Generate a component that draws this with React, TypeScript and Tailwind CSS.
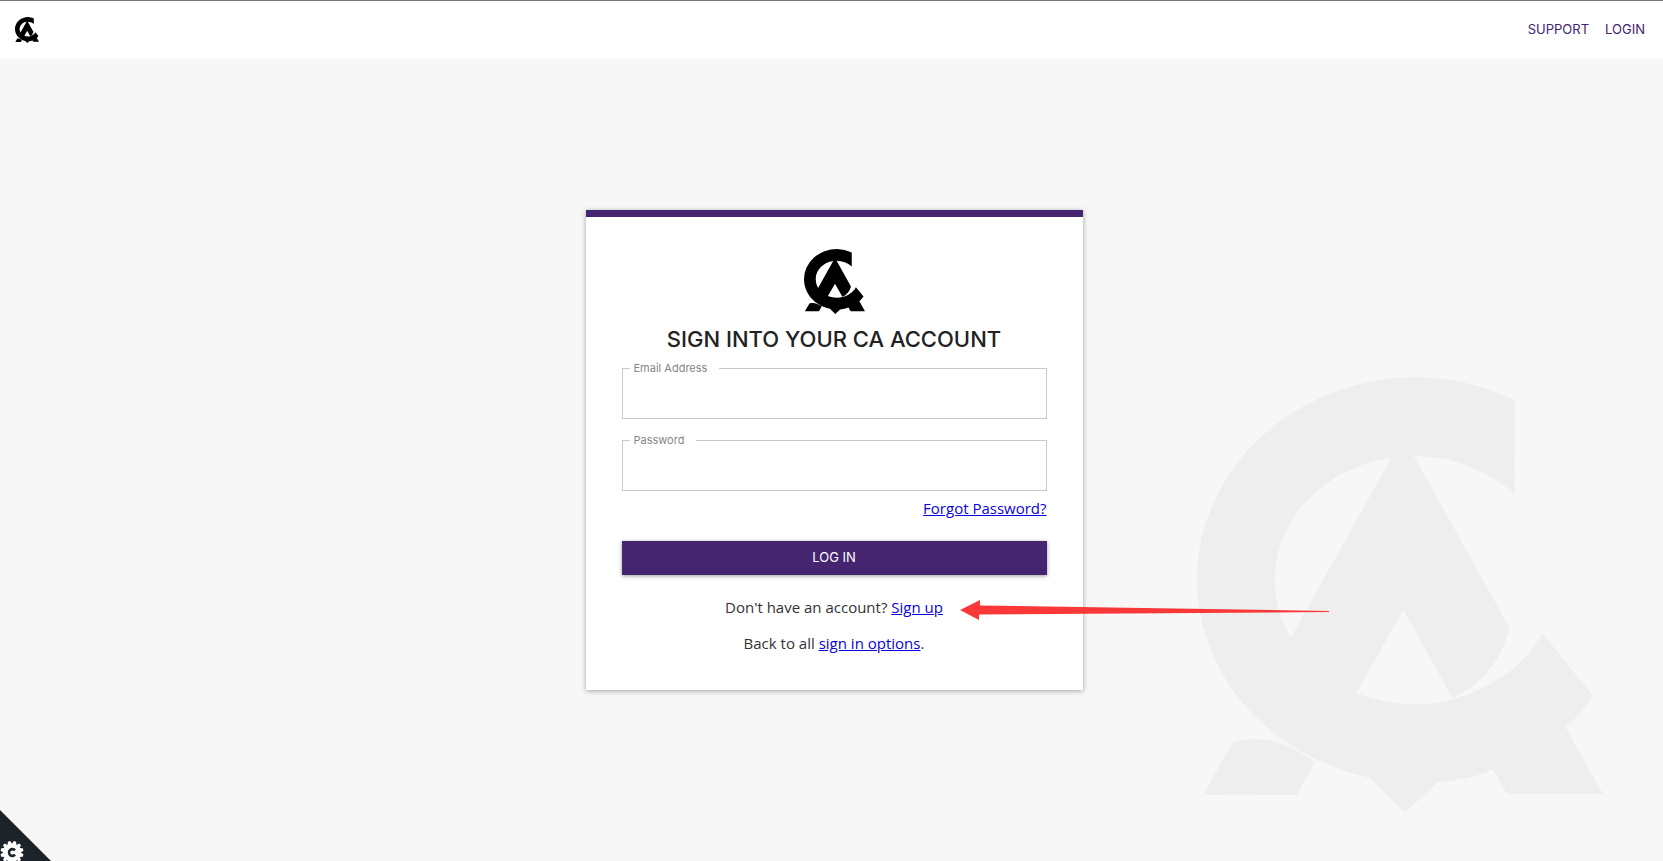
import { useState } from "react";
import type { FormEvent, InputHTMLAttributes } from "react";

// ---- Logo ----

function Logo({ className }: { className?: string }) {
  return (
    <svg
      viewBox="52 50 1218 1308"
      fill="currentColor"
      fillRule="evenodd"
      preserveAspectRatio="none"
      className={className}
      aria-hidden="true"
    >
      <path d="M1005 119A663 607 0 0 0 715 50A663 607 0 0 0 52 657C52 925 245 1180 572 1253L675 1357L775 1265Q862 1260 940 1228L982 1301H1270L1158 1101Q1205 1060 1241 1008L1088 818C1030 925 930 985 820 1017Q770 1032 715 1032C650 1032 590 1022 530 998L671 748L818 1012C905 975 965 900 990 803L703 287C820 287 920 330 1005 400ZM635 292C440 320 286 470 286 659Q286 750 333 833Z" />
      <path d="M160 1145C245 1120 330 1150 405 1205L352 1304L70 1303Z" />
    </svg>
  );
}

// ---- Outlined text field ----

interface FieldProps extends InputHTMLAttributes<HTMLInputElement> {
  id: string;
  label: string;
}

function Field({ id, label, ...rest }: FieldProps) {
  return (
    <div className="relative">
      <input
        id={id}
        className="block h-[51px] w-full border border-[#c8c8c8] bg-white px-3 text-base outline-none focus:border-[#452470]"
        {...rest}
      />
      <label htmlFor={id} className="absolute -top-2 left-2 bg-white pr-3 pl-1 text-[11px] leading-4 text-[#868686]">
        {label}
      </label>
    </div>
  );
}

// ---- Corner badge ----

const TEETH = [0, 30, 60, 90, 120, 150, 180, 210, 240, 270, 300, 330];

function CornerBadge() {
  return (
    <button type="button" aria-label="Cookie settings" className="absolute bottom-0 left-0">
      <svg width="51" height="51" viewBox="0 0 51 51" className="block">
        <path d="M0 0L51 51H0Z" fill="#1d2429" />
        <g transform="translate(12 42.5)">
          <circle r="9" fill="#fff" />
          {TEETH.map((deg) => (
            <path key={deg} d="M-2.4 -8L-1.2 -11.5H1.2L2.4 -8Z" fill="#fff" transform={`rotate(${deg + 15})`} />
          ))}
          <path d="M3 -2.2A3.4 3.4 0 1 0 3 2.2" fill="none" stroke="#1d2429" strokeWidth="2.6" />
        </g>
      </svg>
    </button>
  );
}

const linkClass = "text-[#0a00e0] underline";

export default function App() {
  const [email, setEmail] = useState("");
  const [password, setPassword] = useState("");

  const handleSubmit = (e: FormEvent) => {
    e.preventDefault();
  };

  return (
    <div className="relative flex min-h-screen flex-col overflow-hidden bg-[#f7f7f7] font-[Inter,sans-serif] text-[#222]">
      <header className="flex h-[58px] items-center justify-between border-t border-[#777] bg-white pr-[18px] pl-[15px]">
        <a href="#home" aria-label="Home">
          <Logo className="h-[26px] w-6 text-black" />
        </a>
        <nav className="flex gap-4 text-[13px] text-[#452470]">
          <a href="#support">SUPPORT</a>
          <a href="#login">LOGIN</a>
        </nav>
      </header>

      <Logo className="absolute right-[60px] bottom-12 h-[436px] w-[406px] text-[#eee]" />

      <main className="flex flex-1 items-start justify-center pt-[152px] pb-10 pl-[5px]">
        <section className="relative w-full max-w-[497px] border-t-[7px] border-[#452470] bg-white px-9 pt-8 pb-[35px] shadow-[0_1px_5px_rgba(0,0,0,0.35)]">
          <Logo className="mx-auto h-[65px] w-[61px] text-black" />
          <h1 className="mt-[9px] text-center text-[22px] leading-8 font-medium">SIGN INTO YOUR CA ACCOUNT</h1>

          <form onSubmit={handleSubmit} className="mt-[13px] flex flex-col">
            <div className="flex flex-col gap-[21px]">
              <Field
                id="email"
                label="Email Address"
                type="email"
                value={email}
                onChange={(e) => setEmail(e.target.value)}
              />
              <Field
                id="password"
                label="Password"
                type="password"
                value={password}
                onChange={(e) => setPassword(e.target.value)}
              />
            </div>
            <div className="mt-[5px] text-right font-['Open_Sans',sans-serif] text-[15px] leading-6">
              <a href="#forgot" className={linkClass}>
                Forgot Password?
              </a>
            </div>
            <button
              type="submit"
              className="mt-[21px] h-[34px] bg-[#452470] text-[13px] text-white shadow-[0_1px_4px_rgba(0,0,0,0.4)]"
            >
              LOG IN
            </button>
          </form>

          <div className="mt-5 flex flex-col gap-3 text-center font-['Open_Sans',sans-serif] text-[15px] leading-6 text-[#333]">
            <p>
              Don't have an account?{" "}
              <a href="#signup" className={linkClass}>
                Sign up
              </a>
            </p>
            <p>
              Back to all{" "}
              <a href="#options" className={linkClass}>
                sign in options
              </a>
              .
            </p>
          </div>

          {/* arrow pointing at the sign-up link */}
          <svg
            width="370"
            height="20"
            viewBox="0 0 370 20"
            className="pointer-events-none absolute bottom-[70px] left-[374px] max-w-none"
            aria-hidden="true"
          >
            <path d="M0 10L20 0V5.5L369 11L369 12L19 14.5V20Z" fill="#fb3838" />
          </svg>
        </section>
      </main>

      <CornerBadge />
    </div>
  );
}
